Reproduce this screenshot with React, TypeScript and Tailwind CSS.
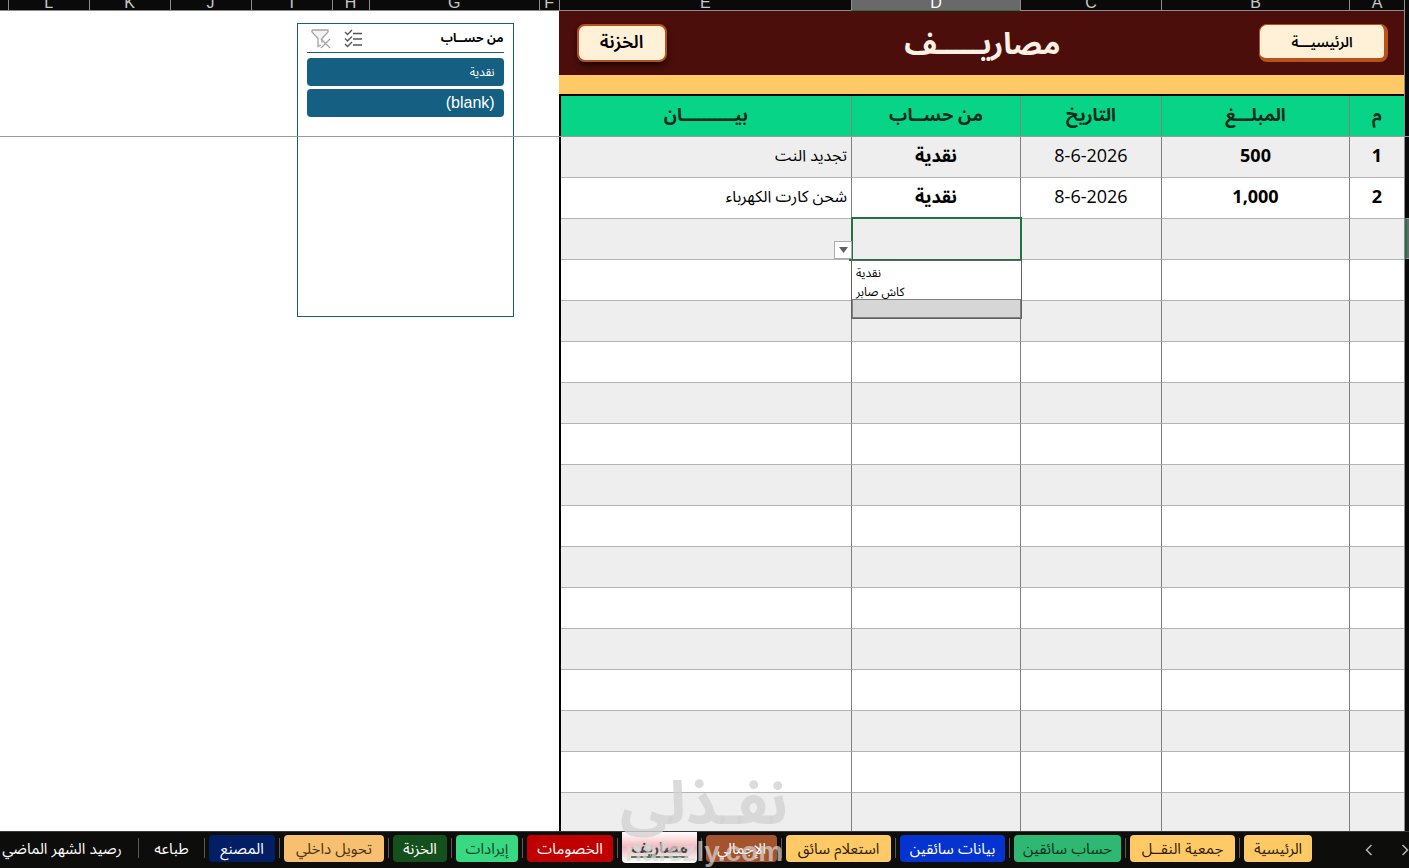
import React, { useState } from "react";

const sheetColumns = [
  { name: "A", width: "w-[55px]" },
  { name: "B", width: "w-[188px]" },
  { name: "C", width: "w-[141px]" },
  { name: "D", width: "w-[169px]" },
];

const sideColumns = [
  { name: "F", width: "w-5" },
  { name: "G", width: "w-[170px]" },
  { name: "H", width: "w-[37px]" },
  { name: "I", width: "w-[81px]" },
  { name: "J", width: "w-[81px]" },
  { name: "K", width: "w-[81px]" },
  { name: "L", width: "w-[81px]" },
];

const expenses = [
  { id: "1", amount: "500", date: "8-6-2026", account: "نقدية", note: "تجديد النت" },
  { id: "2", amount: "1,000", date: "8-6-2026", account: "نقدية", note: "شحن كارت الكهرباء" },
];

const emptyRows = Array.from({ length: 15 }, (_, i) => i);

const tabs = [
  { name: "الرئيسية", style: "w-[68px] bg-[#ffc966] text-[#2b1d08]" },
  { name: "جمعية النقــل", style: "w-[105px] bg-[#ffc966] text-[#2b1d08]" },
  { name: "حساب سائقين", style: "w-[107px] bg-[#2fb872] text-[#06311c]" },
  { name: "بيانات سائقين", style: "w-[105px] bg-[#0433cf] text-white" },
  { name: "استعلام سائق", style: "w-[105px] bg-[#ffc966] text-[#2b1d08]" },
  { name: "الإجمالي", style: "w-[71px] bg-[#a5532c] text-white" },
  { name: "مصاريف", style: "active" },
  { name: "الخصومات", style: "w-[86px] bg-[#c00000] text-white" },
  { name: "إيرادات", style: "w-[62px] bg-[#38d982] text-[#0b4526]" },
  { name: "الخزنة", style: "w-[54px] bg-[#14501c] text-white" },
  { name: "تحويل داخلي", style: "w-[100px] bg-[#f7c070] text-[#4a3210]" },
  { name: "المصنع", style: "w-[66px] bg-[#021f66] text-white" },
  { name: "طباعه", style: "w-[57px] text-white" },
  { name: "رصيد الشهر الماضي", style: "w-[144px] text-white" },
];

const ColumnHead = ({ name, width }: { name: string; width: string }) => (
  <div
    className={`${width} flex h-[11px] shrink-0 items-end justify-center overflow-hidden border-b border-l border-[#8c8c8c] text-base leading-[14px] ${
      name === "D" ? "border-b-[#217346] bg-[#696969] text-white" : "bg-[#0a0a0a] text-[#c8c8c8]"
    }`}
  >
    <span className="h-[14px]">{name}</span>
  </div>
);

const Slicer = () => {
  const items = ["نقدية", "(blank)"];
  return (
    <section className="ms-[45px] mt-3 h-[294px] w-[217px] border border-[#156082] bg-white px-[9px]">
      <div className="flex h-[29px] items-center justify-between border-b border-[#156082]">
        <h2 className="text-xs font-bold text-black">من حســاب</h2>
        <div className="flex items-center gap-3 pe-1">
          <button aria-label="تحديد متعدد">
            <svg width="20" height="20" viewBox="0 0 20 20" fill="none" stroke="#555" strokeWidth="1.3">
              <path d="M2 4l2.500 2.500L9 2M2 10.500l2.500 2.500L9 8.500M2 16l2.500 2.500L9 14" />
              <path d="M10 5.500h9M10 11h9M10 17h9" />
            </svg>
          </button>
          <button aria-label="مسح التصفية">
            <svg width="20" height="21" viewBox="0 0 20 21" fill="none" stroke="#a6a6a6" strokeWidth="1.3">
              <path d="M1 2h16v2l-6 6.500v4M1 2v2l6 6.500v8l3-1.500" fill="#f3f3f3" />
              <path d="M10 11l9 9M19 11l-9 9" />
            </svg>
          </button>
        </div>
      </div>
      <div className="mt-[5px] flex flex-col gap-[3px]">
        {items.map((item) => (
          <button
            key={item}
            dir="ltr"
            className={`flex h-7 items-center justify-end rounded bg-[#156082] px-[9px] text-white ${
              item === "(blank)" ? "text-base" : "text-xs"
            }`}
          >
            {item}
          </button>
        ))}
      </div>
    </section>
  );
};

const AccountPicker = () => {
  const [account, setAccount] = useState("");
  return (
    <>
      <div className="absolute -inset-y-0.5 -right-0.5 -left-px z-10 border-2 border-[#217346]">
        <span className="absolute -bottom-0.5 -left-1 size-1 bg-[#217346]" />
      </div>
      <button
        aria-label="فتح القائمة"
        className="absolute right-full bottom-0 z-10 flex h-[18px] w-[18px] items-center justify-center border border-[#ababab] bg-white"
      >
        <svg width="9" height="6" viewBox="0 0 9 6">
          <path d="M0 0h9L4.500 6z" fill="#606060" />
        </svg>
      </button>
      <select
        size={3}
        aria-label="من حساب"
        dir="ltr"
        value={account}
        onChange={(e) => setAccount(e.target.value)}
        className="absolute top-full -right-0.5 -left-px z-20 mt-px h-[59px] appearance-none overflow-hidden border border-[#606060] bg-white text-xs text-black outline-none"
      >
        <option className="h-[19px] px-1 py-0 leading-4" value="cash">
          نقدية
        </option>
        <option className="h-[19px] px-1 py-0 leading-4" value="saber">
          كاش صابر
        </option>
        <option className="h-[19px] border border-[#808080] bg-[#d6d6d6] px-1 py-0" value="" aria-label="فارغ"></option>
      </select>
    </>
  );
};

const cell = "h-[41px] border-b border-l border-b-[#b4b4b4] border-l-[#808080] px-0 pt-0 pb-1";

const ExpensesTable = () => (
  <table className="w-full table-fixed border-separate border-spacing-0 border-t-2 border-l-2 border-black text-center text-lg leading-6 text-black">
    <colgroup>
      {sheetColumns.map((col) => (
        <col key={col.name} className={col.width} />
      ))}
      <col />
    </colgroup>
    <thead>
      <tr className="bg-[#08d487] text-[#0b2a1c]">
        <th className={cell}>م</th>
        <th className={cell}>المبلـــغ</th>
        <th className={cell}>التاريخ</th>
        <th className={cell}>من حســاب</th>
        <th className={`${cell} border-l-0`}>بيــــــــــان</th>
      </tr>
    </thead>
    <tbody>
      {expenses.map((row) => (
        <tr key={row.id} className="odd:bg-[#eeeeee]">
          <td className={`${cell} font-bold`}>{row.id}</td>
          <td className={`${cell} font-bold`}>{row.amount}</td>
          <td className={cell}>{row.date}</td>
          <td className={`${cell} font-bold`}>{row.account}</td>
          <td className="h-[41px] border-b border-[#b4b4b4] px-1 pt-0 pb-1 text-start text-base">{row.note}</td>
        </tr>
      ))}
      {emptyRows.map((i) => (
        <tr key={i} className="odd:bg-[#eeeeee]">
          <td className={cell} />
          <td className={cell} />
          <td className={cell} />
          <td className={`${cell} relative`}>{i === 0 && <AccountPicker />}</td>
          <td className={`${cell} border-l-0`} />
        </tr>
      ))}
    </tbody>
  </table>
);

const SheetTabs = () => {
  const [active, setActive] = useState("مصاريف");
  return (
    <nav className="flex h-[37px] shrink-0 items-start overflow-hidden border-t border-[#3a3a3a] bg-[#0d0d0b] text-[15px] leading-6">
      <div className="flex h-9 w-[97px] shrink-0 items-center justify-between text-[#b5b5b5]">
        <button aria-label="السابق">
          <svg width="8" height="12" viewBox="0 0 8 12" fill="none" stroke="currentColor" strokeWidth="1.5">
            <path d="M1.500 1l5 5-5 5" />
          </svg>
        </button>
        <button aria-label="التالي" className="me-[53px]">
          <svg width="8" height="12" viewBox="0 0 8 12" fill="none" stroke="currentColor" strokeWidth="1.5">
            <path d="M6.500 1l-5 5 5 5" />
          </svg>
        </button>
      </div>
      {tabs.map((tab, i) => (
        <React.Fragment key={tab.name}>
          {i > 0 && <span className="mx-1 mt-1.5 h-5 w-px shrink-0 bg-[#5a5a5a]" />}
          <button
            onClick={() => setActive(tab.name)}
            aria-current={active === tab.name}
            className={
              tab.style === "active"
                ? "h-[31px] w-[75px] shrink-0 rounded-b bg-linear-to-b from-white via-[#f3b5b8] to-white font-bold whitespace-nowrap text-[#454545]"
                : `${tab.style} mt-[3px] h-[27px] shrink-0 rounded whitespace-nowrap`
            }
          >
            <span className={tab.style === "active" ? "border-b-2 border-[#4f7d62]" : ""}>{tab.name}</span>
          </button>
        </React.Fragment>
      ))}
    </nav>
  );
};

const App = () => {
  return (
    <div
      dir="rtl"
      className="relative flex h-screen flex-col overflow-hidden bg-white font-['Liberation_Sans','Noto_Sans_Arabic','DejaVu_Sans',sans-serif]"
    >
      <main className="relative flex min-h-0 flex-1 overflow-hidden">
        <aside className="w-[5px] shrink-0 border-l border-[#8c8c8c] bg-[#0a0a0a] pt-[218px]">
          <div className="h-[41px] border-y border-l-2 border-y-[#999] border-l-[#217346] bg-[#696969]" />
        </aside>
        <section className="w-3/5 shrink-0 font-['Open_Sans','Noto_Sans_Arabic','DejaVu_Sans',sans-serif]">
          <div className="flex font-['Liberation_Sans',sans-serif]">
            {sheetColumns.map((col) => (
              <ColumnHead key={col.name} {...col} />
            ))}
            <ColumnHead name="E" width="flex-1" />
          </div>
          <header className="grid h-16 grid-cols-[1fr_auto_1fr] items-center bg-[#4b0e0a] ps-4 pe-[18px]">
            <a
              href="#home"
              className="flex h-[38px] w-[129px] items-center justify-center justify-self-start rounded-lg border border-r-4 border-b-4 border-[#b9521a] bg-[#fff0d8] text-sm font-semibold text-black"
            >
              الرئيسيـــة
            </a>
            <h1 className="text-3xl leading-10 font-bold text-[#fff0e6]">مصاريـــــف</h1>
            <a
              href="#safe"
              className="flex h-[38px] w-[90px] items-center justify-center justify-self-end rounded-lg border-2 border-[#b9521a] bg-[#fff0d8] pb-1 text-lg font-semibold text-black shadow-md shadow-black/60"
            >
              الخزنة
            </a>
          </header>
          <div className="h-[19px] bg-[#ffc966]" />
          <ExpensesTable />
        </section>
        <section className="min-w-0 flex-1 overflow-hidden">
          <div className="flex">
            {sideColumns.map((col) => (
              <ColumnHead key={col.name} {...col} />
            ))}
            <div className="h-[11px] flex-1 border-b border-[#8c8c8c] bg-[#0a0a0a]" />
          </div>
          <Slicer />
        </section>
        <div className="absolute inset-x-0 top-[136px] h-px bg-[#999]" />
      </main>
      <SheetTabs />
      <div
        aria-hidden="true"
        className="pointer-events-none absolute bottom-0 left-[618px] z-30 flex w-[172px] flex-col items-center font-bold"
      >
        <span className="text-6xl leading-[64px] whitespace-nowrap text-[#d2d2d2]/80">نفـذلي</span>
        <span className="text-[28px] leading-8 text-[#d9d9d9]/70">nafezly.com</span>
      </div>
    </div>
  );
};

export default App;
